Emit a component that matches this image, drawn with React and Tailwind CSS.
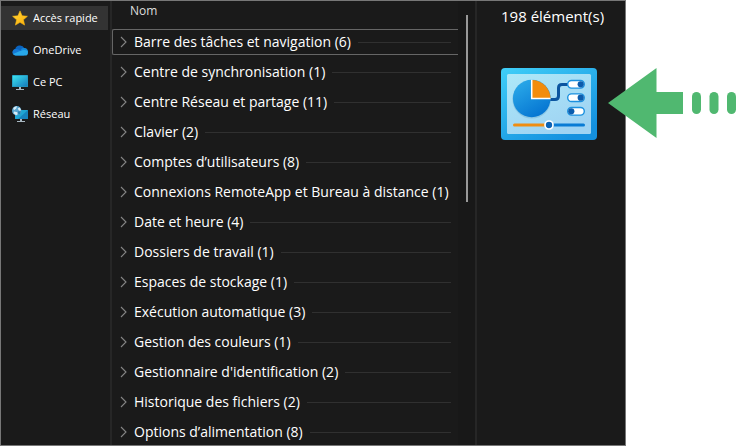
import { useState } from "react";

const categories = [
    { name: "Barre des tâches et navigation", count: 6 },
    { name: "Centre de synchronisation", count: 1 },
    { name: "Centre Réseau et partage", count: 11 },
    { name: "Clavier", count: 2 },
    { name: "Comptes d’utilisateurs", count: 8 },
    { name: "Connexions RemoteApp et Bureau à distance", count: 1 },
    { name: "Date et heure", count: 4 },
    { name: "Dossiers de travail", count: 1 },
    { name: "Espaces de stockage", count: 1 },
    { name: "Exécution automatique", count: 3 },
    { name: "Gestion des couleurs", count: 1 },
    { name: "Gestionnaire d'identification", count: 2 },
    { name: "Historique des fichiers", count: 2 },
    { name: "Options d’alimentation", count: 8 },
];

function StarIcon() {
    return (
        <svg viewBox="0 0 16 16" className="size-4 shrink-0" aria-hidden="true">
            <defs>
                <linearGradient id="star" x1="0" y1="0" x2="1" y2="1">
                    <stop offset="0" stopColor="#ffd93b" />
                    <stop offset="1" stopColor="#fdac08" />
                </linearGradient>
            </defs>
            <path
                d="M8 .9l2.1 4.9 5.3.5-4 3.5 1.2 5.3L8 12.3l-4.6 2.8 1.2-5.3-4-3.5 5.3-.5z"
                fill="url(#star)"
                stroke="#fdba10"
                strokeWidth=".6"
                strokeLinejoin="round"
            />
        </svg>
    );
}

function CloudIcon() {
    return (
        <svg viewBox="0 0 16 16" className="size-4 shrink-0" aria-hidden="true">
            <path d="M3.2 7.1A5 5 0 0 1 12.4 6.2L13 8 8 11 1 11.4A3.2 3.2 0 0 1 3.2 7.1z" fill="#0a64c0" />
            <path d="M9 7.2a3.9 3.9 0 0 1 3.5-1.1A3.9 3.9 0 0 1 16 10L11 11z" fill="#1389dc" />
            <path d="M.8 11.8A3.4 3.4 0 0 1 3.5 7q1.8-.2 3.3.8L14.7 12l-3 1.4H3.6A3.3 3.3 0 0 1 .8 11.8z" fill="#1578d4" />
            <path d="M1 12l8.2-3.5q3.2-1.3 6 .2.8.7.8 2a2.8 2.8 0 0 1-2.8 2.8H3.7A3.4 3.4 0 0 1 1 12z" fill="#28a8ea" />
        </svg>
    );
}

function ComputerIcon() {
    return (
        <svg viewBox="0 0 16 16" className="size-4 shrink-0" aria-hidden="true">
            <defs>
                <linearGradient id="screen" x1="0" y1="0" x2="1" y2="1">
                    <stop offset="0" stopColor="#3ce4ef" />
                    <stop offset="1" stopColor="#167bbd" />
                </linearGradient>
            </defs>
            <path d="M7 13h2v2h3v1H4v-1h3z" fill="#a9b8c2" />
            <rect y="1" width="16" height="12" rx=".6" fill="#2396bd" />
            <rect x=".7" y="1.7" width="14.6" height="10.6" fill="url(#screen)" />
        </svg>
    );
}

function NetworkIcon() {
    return (
        <svg viewBox="0 0 16 16" className="size-4 shrink-0" aria-hidden="true">
            <path d="M8 13h2v2h3v1H5v-1h3z" fill="#a9b8c2" />
            <rect x="3" y="4" width="13" height="9" rx=".5" fill="#1fa6d3" />
            <path d="M16 4v9H6z" fill="#1683bd" />
            <circle cx="4.7" cy="4.7" r="4.7" fill="#5aa5cf" />
            <path d="M1.2 2.1Q3 .2 5.1.3L4.2 2.6 2 4.3zM5.7 2.4l2.1-.8 1.3 2.6-2 .5zM2.1 5.4l3.2.8.3 2-1.5 1-2.6-2z" fill="#d7edf7" />
            <path d="M5.8 5.6l3-.4-.8 2.7-1.4.6z" fill="#277eae" />
        </svg>
    );
}

function ChevronIcon() {
    return (
        <svg viewBox="0 0 7 12" className="h-3 w-[7px] shrink-0" aria-hidden="true">
            <path d="M1 1l5 5-5 5" fill="none" stroke="#858585" strokeWidth="1.1" />
        </svg>
    );
}

function Toggle({ y, on }) {
    return (
        <g>
            <rect x="66.7" y={y} width="16.6" height="7.6" rx="3.8" fill="#fff" stroke="#1b91df" strokeWidth="1.4" />
            <circle cx={on ? 79.7 : 70.3} cy={y + 3.8} r="3.1" fill="#0b5cad" />
        </g>
    );
}

function ControlPanelIcon() {
    return (
        <svg viewBox="0 0 96 72" className="h-[72px] w-24" role="img" aria-label="Panneau de configuration">
            <defs>
                <linearGradient id="frame" x1="0" y1="0" x2=".7" y2="1">
                    <stop offset="0" stopColor="#40cff8" />
                    <stop offset="1" stopColor="#1490df" />
                </linearGradient>
                <linearGradient id="board" x1="0" y1="0" x2=".6" y2="1">
                    <stop offset="0" stopColor="#ade8f8" />
                    <stop offset="1" stopColor="#9fd3f3" />
                </linearGradient>
                <linearGradient id="pie" x1="0" y1="0" x2=".6" y2="1">
                    <stop offset="0" stopColor="#2eafeb" />
                    <stop offset="1" stopColor="#0676d2" />
                </linearGradient>
            </defs>
            <rect width="96" height="72" rx="4" fill="url(#frame)" />
            <rect x="6" y="6" width="84" height="60" rx="1.5" fill="url(#board)" />
            <path d="M49 31.5h5q3.5 0 3.5-3.5v-8q0-3.5 3.5-3.5h6" fill="none" stroke="#0b55a0" strokeWidth="3" />
            <circle cx="30.7" cy="31.3" r="19.3" fill="#5299bc" opacity=".3" />
            <circle cx="30.7" cy="30.5" r="18.8" fill="url(#pie)" />
            <path d="M31 30.5V12a18.5 18.5 0 0 1 18.5 18.5z" fill="#f28c0d" />
            <path d="M30.7 11.7v18.8h18.8" fill="none" stroke="#fff" strokeWidth="1.5" />
            <Toggle y={12.5} on />
            <Toggle y={25.9} on />
            <Toggle y={39.5} />
            <path d="M13.5 57H48" stroke="#ef8d12" strokeWidth="3" strokeLinecap="round" />
            <path d="M48 57h34.5" stroke="#087bd5" strokeWidth="3" strokeLinecap="round" />
            <circle cx="48" cy="57" r="4" fill="#0b62b5" stroke="#fff" strokeWidth="1.7" />
        </svg>
    );
}

function Arrow() {
    return (
        <svg viewBox="0 0 128 70" className="absolute top-[68px] right-0 h-[70px] w-32" aria-hidden="true">
            <g fill="#50b870">
                <path d="M0 35L48.500 0v24H75v22H48.500v24z" />
                <rect x="84" y="24" width="9" height="22" rx="4.5" />
                <rect x="101.500" y="24" width="9" height="22" rx="4.5" />
                <rect x="119" y="24" width="9" height="22" rx="4.5" />
            </g>
        </svg>
    );
}

const places = [
    { name: "Accès rapide", Icon: StarIcon },
    { name: "OneDrive", Icon: CloudIcon },
    { name: "Ce PC", Icon: ComputerIcon },
    { name: "Réseau", Icon: NetworkIcon },
];

export default function App() {
    const [place, setPlace] = useState("Accès rapide");
    const [selected, setSelected] = useState(categories[0].name);

    return (
        <div className="relative bg-white pr-[110px] font-['Open_Sans','Noto_Sans',sans-serif] text-white">
            <div className="flex border border-[#777] bg-[#1a1a1a]">
                <nav className="w-[111px] shrink-0 border-r-2 border-[#262626] pt-[5px] pr-0.5">
                    <ul className="flex flex-col gap-2">
                        {places.map(({ name, Icon }) => (
                            <li key={name}>
                                <button
                                    type="button"
                                    onClick={() => setPlace(name)}
                                    className={`flex h-6 w-full items-center gap-[5px] pl-[11px] text-[11px] whitespace-nowrap ${
                                        place === name ? "bg-[#333]" : ""
                                    }`}
                                >
                                    <Icon />
                                    <span>{name}</span>
                                </button>
                            </li>
                        ))}
                    </ul>
                </nav>

                <main className="min-w-0 flex-1">
                    <h2 className="h-7 pl-[18px] text-xs leading-5 text-[#dedede]">Nom</h2>
                    <ul className="flex flex-col gap-1">
                        {categories.map(({ name, count }) => (
                            <li key={name}>
                                <button
                                    type="button"
                                    onClick={() => setSelected(name)}
                                    className={`flex h-[26px] w-full items-center gap-[7px] border border-r-0 pr-[7px] pl-[7px] text-sm whitespace-nowrap ${
                                        selected === name ? "rounded-l-xs border-[#666]" : "border-transparent"
                                    }`}
                                >
                                    <ChevronIcon />
                                    <span>
                                        {name} ({count})
                                    </span>
                                    <span className="h-px min-w-0 flex-1 bg-[#303030]" />
                                </button>
                            </li>
                        ))}
                    </ul>
                </main>

                <div className="flex w-[17px] shrink-0 justify-center bg-[#181818] pt-3.5">
                    <div className="h-[187px] w-0.5 bg-[#999]" />
                </div>

                <aside className="w-[150px] shrink-0 border-l-2 border-[#262626] pt-[3px] pl-6">
                    <p className="text-[15px] leading-6 whitespace-nowrap">198 élément(s)</p>
                    <div className="pt-10">
                        <ControlPanelIcon />
                    </div>
                </aside>
            </div>
            <Arrow />
        </div>
    );
}
